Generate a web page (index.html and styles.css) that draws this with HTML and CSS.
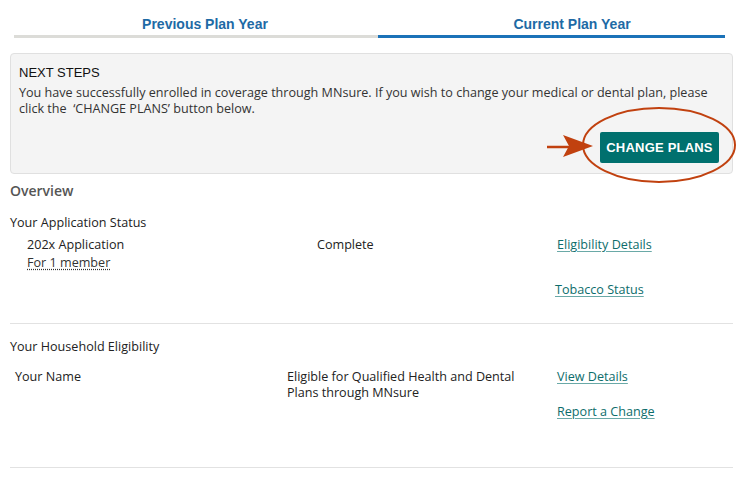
FILE: index.html
```html
<!DOCTYPE html>
<html>
<head>
<meta charset="utf-8">
<link rel="stylesheet" href="styles.css">
</head>
<body>
<div class="page">
  <div class="tabs">
    <div class="tab tab-prev">Previous Plan Year</div>
    <div class="tab tab-cur active">Current Plan Year</div>
  </div>

  <div class="panel">
    <div class="panel-title">NEXT STEPS</div>
    <p class="panel-text">You have successfully enrolled in coverage through MNsure. If you wish to change your medical or dental plan, please click the &nbsp;‘CHANGE PLANS’ button below.</p>
    <div class="panel-actions">
      <button class="btn">CHANGE PLANS</button>
      <svg class="annot" width="200" height="82" viewBox="0 0 200 82">
        <line x1="0" y1="40" x2="22" y2="40" stroke="#c1410f" stroke-width="2.5"/>
        <polygon points="16,28 46,39 16,50 22,39" fill="#c1410f"/>
        <ellipse cx="112" cy="38" rx="76" ry="37" fill="none" stroke="#c1410f" stroke-width="2"/>
      </svg>
    </div>
  </div>

  <h2 class="overview">Overview</h2>

  <section class="section">
    <div class="section-title">Your Application Status</div>
    <div class="row app-row">
      <div class="col col-a">
        <div>202x Application</div>
        <a class="dotted">For 1 member</a>
      </div>
      <div class="col col-b">Complete</div>
      <div class="col col-c">
        <a class="link">Eligibility Details</a>
        <a class="link tobacco">Tobacco Status</a>
      </div>
    </div>
  </section>

  <section class="section">
    <div class="section-title">Your Household Eligibility</div>
    <div class="row hh-row">
      <div class="col col-a2">Your Name</div>
      <div class="col col-b2">Eligible for Qualified Health and Dental Plans through MNsure</div>
      <div class="col col-c">
        <a class="link">View Details</a>
        <a class="link report">Report a Change</a>
      </div>
    </div>
  </section>
</div>
</body>
</html>
```

FILE: styles.css
```css
* { box-sizing: border-box; }
body {
  margin: 0;
  background: #fff;
  font-family: "Open Sans", "Noto Sans", sans-serif;
  font-size: 12.6px;
  color: #222;
}
.page {
  padding: 15px 13px 0 10px;
}
.tabs {
  display: flex;
  padding: 0 0 0 4px;
}
.tab {
  font-family: "Liberation Sans", Arial, sans-serif;
  font-weight: bold;
  font-size: 14px;
  color: #1e6aa5;
  padding-bottom: 2px;
  border-bottom: 3px solid #dcdcd8;
  line-height: 18px;
  text-align: center;
}
.tab-prev { width: 364px; padding-left: 18px; }
.tab-cur { width: 347px; padding-left: 41px; }
.tab.active {
  border-bottom-color: #1b72b8;
}
.panel {
  margin-top: 15px;
  background: #f4f4f4;
  border: 1px solid #e0e0e0;
  border-radius: 4px;
  padding: 11px 8px 10px 8px;
  height: 121px;
}
.panel-title {
  font-family: "Liberation Sans", Arial, sans-serif;
  font-size: 13px;
  color: #111;
  line-height: 16px;
}
.panel-text {
  margin: 4px 0 0 0;
  line-height: 16px;
  color: #333;
}
.panel-actions {
  display: flex;
  justify-content: flex-end;
  margin-top: 15px;
  padding-right: 5px;
  position: relative;
}
.btn {
  background: #00706e;
  color: #fff;
  border: 0;
  border-radius: 2px;
  font-family: "Liberation Sans", Arial, sans-serif;
  font-weight: bold;
  font-size: 13px;
  width: 119px;
  height: 31px;
  padding: 0;
  letter-spacing: 0.2px;
}
.annot {
  position: absolute;
  right: -23px;
  top: -25px;
  overflow: visible;
}
.overview {
  margin: 8px 0 0 0;
  font-size: 14px;
  font-weight: 600;
  color: #555;
  line-height: 18px;
}
.section {
  border-bottom: 1px solid #e2e2e2;
}
.section-title {
  margin-top: 14px;
  line-height: 18px;
}
.row {
  display: flex;
  line-height: 18px;
}
.app-row { margin-top: 4px; height: 87px; }
.hh-row { margin-top: 12px; height: 99px; }
.col-a { padding-left: 17px; width: 307px; }
.col-b { width: 240px; }
.col-a2 { padding-left: 5px; width: 277px; }
.col-b2 { width: 270px; padding-right: 32px; line-height: 16px; padding-top: 1px; }
.col-c { display: flex; flex-direction: column; align-items: flex-start; }
.link {
  color: #0d6d6b;
  text-decoration: underline;
  text-decoration-color: #6aa9a7;
  text-underline-offset: 2px;
}
.tobacco { margin-top: 27px; margin-left: -2px; }
.report { margin-top: 17px; }
.dotted {
  color: #333;
  text-decoration: underline dotted;
  text-underline-offset: 2px;
}
```
